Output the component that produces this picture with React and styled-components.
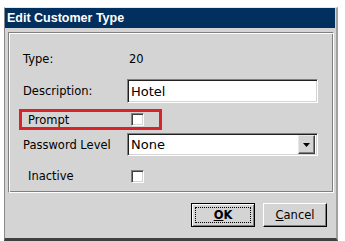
import React from 'react';
import styled, { createGlobalStyle } from 'styled-components';

const GlobalStyle = createGlobalStyle`
  html, body {
    margin: 0;
    padding: 0;
    background: #ffffff;
  }
  body {
    font-family: "DejaVu Sans", Verdana, sans-serif;
    font-size: 11.5px;
    color: #000;
  }
`;

const Page = styled.div`
  width: 345px;
  height: 241px;
  padding: 7px 0 0 4px;
  box-sizing: border-box;
  overflow: hidden;
`;

const Window = styled.div`
  width: 334px;
  height: 234px;
  box-sizing: border-box;
  background: #d4d4d4;
  border-top: 1px solid #e8e8e8;
  border-left: 1px solid #8a8a8a;
  border-right: 2px solid #a0a0a0;
  border-bottom: 3px solid #404040;
  display: flex;
  flex-direction: column;
`;

const TitleBar = styled.div`
  height: 20px;
  background: #02305e;
  color: #ffffff;
  font-family: "Liberation Sans", Arial, sans-serif;
  font-weight: bold;
  font-size: 12.5px;
  display: flex;
  align-items: center;
  padding-left: 2px;
  margin-right: 1px;
`;

const Body = styled.div`
  flex: 1;
  padding: 4px 2px 0 3px;
  display: flex;
  flex-direction: column;
`;

const Group = styled.div`
  height: 161px;
  box-sizing: border-box;
  border-top: 1px solid #808080;
  border-left: 1px solid #808080;
  border-right: 1px solid #ffffff;
  border-bottom: 1px solid #ffffff;
  box-shadow: inset 1px 1px 0 #ffffff, inset -1px -1px 0 #808080;
  padding: 14px 14px 0 14px;
  display: flex;
  flex-direction: column;
`;

const Row = styled.div`
  display: flex;
  align-items: center;
  height: ${p => p.$h}px;
  margin-top: ${p => p.$mt}px;
`;

const MarkedRow = styled(Row)`
  width: 143px;
  box-sizing: border-box;
  margin-left: -4px;
  padding-left: 2px;
  border: 3px solid #d8232b;
`;

const Label = styled.div`
  width: ${p => p.$w ?? 104}px;
  padding-left: ${p => p.$indent ?? 0}px;
  box-sizing: border-box;
  flex-shrink: 0;
`;

const Value = styled.div`
  padding-left: 2px;
`;

const TextBox = styled.div`
  width: 191px;
  height: 24px;
  box-sizing: border-box;
  background: #ffffff;
  border-top: 1px solid #808080;
  border-left: 1px solid #808080;
  border-right: 1px solid #ffffff;
  border-bottom: 1px solid #ffffff;
  box-shadow: inset 1px 1px 0 #202020, inset -1px -1px 0 #d4d4d4;
  display: flex;
  align-items: center;
  padding-left: 3px;
  font-size: 13px;
`;

const SelectBox = styled(TextBox)`
  height: 23px;
  padding-right: 2px;
  justify-content: space-between;
`;

const DropButton = styled.div`
  width: 17px;
  height: 19px;
  background: #d4d4d4;
  border-top: 1px solid #e8e8e8;
  border-left: 1px solid #e8e8e8;
  border-right: 1px solid #404040;
  border-bottom: 1px solid #404040;
  box-shadow: inset -1px -1px 0 #808080;
  box-sizing: border-box;
  display: flex;
  align-items: center;
  justify-content: center;
`;

const Check = styled.div`
  width: 13px;
  height: 13px;
  box-sizing: border-box;
  margin-left: ${p => p.$ml ?? 4}px;
  background: #ffffff;
  border-top: 1px solid #808080;
  border-left: 1px solid #808080;
  border-right: 1px solid #ffffff;
  border-bottom: 1px solid #ffffff;
  box-shadow: inset 1px 1px 0 #404040, inset -1px -1px 0 #d4d4d4;
`;

const Buttons = styled.div`
  display: flex;
  justify-content: flex-end;
  gap: 8px;
  margin-top: 10px;
  padding-right: 7px;
`;

const Button = styled.div`
  width: 64px;
  height: 24px;
  box-sizing: border-box;
  background: #d4d4d4;
  border: 1px solid ${p => (p.$default ? '#000000' : '#ffffff')};
  border-right-color: #000000;
  border-bottom-color: #000000;
  box-shadow: ${p =>
    p.$default
      ? 'inset 1px 1px 0 #ffffff, inset -1px -1px 0 #808080'
      : 'inset -1px -1px 0 #808080'};
  display: flex;
  align-items: center;
  justify-content: center;
  padding: 3px;
  font-size: 11.5px;
  font-weight: ${p => (p.$default ? 'bold' : 'normal')};
`;

const Focus = styled.div`
  width: 100%;
  height: 100%;
  box-sizing: border-box;
  border: 1px dotted #000000;
  display: flex;
  align-items: center;
  justify-content: center;
`;

export default function App() {
  return (
    <>
      <GlobalStyle />
      <Page>
        <Window>
          <TitleBar>Edit Customer Type</TitleBar>
          <Body>
            <Group>
              <Row $h={24} $mt={0}>
                <Label>Type:</Label>
                <Value>20</Value>
              </Row>
              <Row $h={24} $mt={8}>
                <Label>Description:</Label>
                <TextBox>Hotel</TextBox>
              </Row>
              <MarkedRow $h={21} $mt={6}>
                <Label $w={107} $indent={4}>Prompt</Label>
                <Check $ml={0} />
              </MarkedRow>
              <Row $h={23} $mt={3}>
                <Label>Password Level</Label>
                <SelectBox>
                  None
                  <DropButton>
                    <svg width="7" height="4" viewBox="0 0 7 4">
                      <path d="M0 0h7L3.5 4z" fill="#000" />
                    </svg>
                  </DropButton>
                </SelectBox>
              </Row>
              <Row $h={24} $mt={8}>
                <Label $indent={5}>Inactive</Label>
                <Check />
              </Row>
            </Group>
            <Buttons>
              <Button $default>
                <Focus>
                  <u>O</u>K
                </Focus>
              </Button>
              <Button>
                <span>
                  <u>C</u>ancel
                </span>
              </Button>
            </Buttons>
          </Body>
        </Window>
      </Page>
    </>
  );
}
